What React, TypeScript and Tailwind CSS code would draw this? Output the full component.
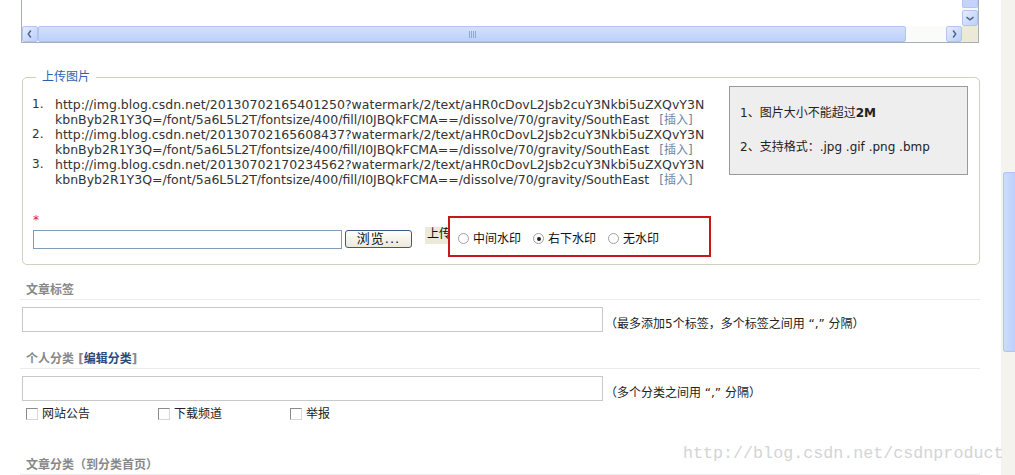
import React from "react";

const urls = [
  ["20130702165401250"],
  ["20130702165608437"],
  ["20130702170234562"],
];

function ArrowBtn({ dir }: { dir: "left" | "right" | "down" }) {
  const paths: Record<string, string> = {
    left: "M9 4 L6 8 L9 12",
    right: "M7 4 L10 8 L7 12",
    down: "M4 7 L8 10 L12 7",
  };
  return (
    <div className="w-[16px] h-[16px] shrink-0 rounded-[2px] border border-[#b3c4ee] bg-[linear-gradient(135deg,#e4ecff,#bccffa)] flex items-center justify-center">
      <svg width="16" height="16" viewBox="0 0 16 16">
        <path d={paths[dir]} fill="none" stroke="#4d6185" strokeWidth="1.6" />
      </svg>
    </div>
  );
}

function Radio({ checked }: { checked?: boolean }) {
  return (
    <span className="w-[11px] h-[11px] rounded-full border border-[#a0a0a0] bg-white flex items-center justify-center shrink-0">
      {checked && <span className="w-[4px] h-[4px] rounded-full bg-[#222]" />}
    </span>
  );
}

function Check() {
  return <span className="w-[12px] h-[12px] border border-[#8a8a8a] bg-white shrink-0 border-r-[#d8d8d8] border-b-[#d8d8d8]" />;
}

export default function App() {
  return (
    <div className="flex w-[1015px] h-[475px] overflow-hidden bg-white font-['DejaVu_Sans','Noto_Sans_CJK_SC',sans-serif] text-[12px] text-[#333]">
      <div className="relative w-[1001px] shrink-0 flex flex-col">
        {/* textarea remnant with scrollbars */}
        <div className="ml-[21px] w-[958px] h-[43px] border-x border-b border-[#a8aeb8] flex flex-col">
          <div className="flex h-[26px]">
            <div className="flex-1" />
            <div className="w-[16px] flex flex-col bg-[#f8f8f6]">
              <div className="h-[8px] rounded-b-[2px] border border-t-0 border-[#b3c4ee] bg-[#c3d3fb]" />
              <div className="flex-1" />
              <ArrowBtn dir="down" />
            </div>
          </div>
          <div className="flex h-[16px]">
            <ArrowBtn dir="left" />
            <div className="w-[868px] h-[16px] rounded-[2px] border border-[#b3c4ee] bg-[linear-gradient(180deg,#d3e0fd,#bcd0fb)] flex items-center justify-center">
              <div className="flex gap-[1px]">
                <span className="w-[1px] h-[7px] bg-[#8fa6d8]" />
                <span className="w-[1px] h-[7px] bg-[#8fa6d8]" />
                <span className="w-[1px] h-[7px] bg-[#8fa6d8]" />
                <span className="w-[1px] h-[7px] bg-[#8fa6d8]" />
              </div>
            </div>
            <div className="flex-1 bg-[#fbfbf9]" />
            <ArrowBtn dir="right" />
            <div className="w-[16px] bg-[#ece9d8]" />
          </div>
        </div>

        {/* upload fieldset */}
        <fieldset className="ml-[22px] mt-[27px] w-[958px] border border-[#d0d0bf] rounded-[5px] px-[9px] pb-[15px]">
          <legend className="ml-[4px] px-[6px] leading-[15px] text-[#2f5fb0]">上传图片</legend>
          <div className="flex items-start pt-[1px]">
            <div className="flex-1 flex flex-col mt-[11px]">
              {urls.map((u, i) => (
                <div key={i} className="flex h-[30px] text-[12.5px] leading-[15px] whitespace-nowrap">
                  <span className="w-[23px] shrink-0 text-[12px]">{i + 1}.</span>
                  <div className="flex flex-col">
                    <div className="h-[15px]">http://img.blog.csdn.net/{u[0]}?watermark/2/text/aHR0cDovL2Jsb2cuY3Nkbi5uZXQvY3N</div>
                    <div className="h-[15px] flex items-baseline">
                      <span>kbnByb2R1Y3Q=/font/5a6L5L2T/fontsize/400/fill/I0JBQkFCMA==/dissolve/70/gravity/SouthEast</span>
                      <span className="ml-[10px] text-[12px] text-[#6f86a6]">[插入]</span>
                    </div>
                  </div>
                </div>
              ))}
            </div>
            <div className="w-[239px] h-[89px] mr-[2px] bg-[#eeeeee] border border-[#9a9a9a] pl-[10px] pt-[19px] leading-[15px] text-[#222]">
              <div>
                1、图片大小不能超过<span className="font-bold">2M</span>
              </div>
              <div className="mt-[19px]">2、支持格式：.jpg .gif .png .bmp</div>
            </div>
          </div>
          <div className="mt-[27px] text-[#d22] leading-[12px] pl-[1px]">*</div>
          <div className="relative mt-[4px] flex items-start h-[19px]">
            <div className="ml-[1px] w-[309px] h-[19px] border border-[#7f9db9] bg-white" />
            <button className="ml-[3px] w-[67px] h-[18px] rounded-[3px] border border-[#3a5a85] bg-[linear-gradient(180deg,#ffffff,#ece9d8)] text-[13px] leading-[16px] text-[#111] tracking-[1px]">
              浏览...
            </button>
            <div className="ml-[13px] -mt-[3px] h-[17px] w-[30px] bg-[#ece9d8] leading-[15px] pl-[2px] text-[#111]">上传</div>
            <div className="absolute left-[416px] top-[-14px] w-[263px] h-[41px] border-2 border-[#c8161d] bg-white flex items-center pl-[8px] pt-[4px] text-[#111]">
              <div className="flex items-center">
                <Radio />
                <span className="ml-[4px]">中间水印</span>
              </div>
              <div className="flex items-center ml-[12px]">
                <Radio checked />
                <span className="ml-[4px]">右下水印</span>
              </div>
              <div className="flex items-center ml-[12px]">
                <Radio />
                <span className="ml-[4px]">无水印</span>
              </div>
            </div>
          </div>
        </fieldset>

        {/* tags */}
        <div className="ml-[20px] w-[960px] mt-[16px]">
          <div className="pl-[6px] pt-[2px] pb-[1px] leading-[15px] font-bold text-[#888] border-b border-[#ececec]">文章标签</div>
          <div className="mt-[7px] flex items-end">
            <div className="ml-[2px] w-[581px] h-[25px] border border-[#c8c8c8]" />
            <span className="ml-[2px] leading-[15px] text-[#222]">（最多添加5个标签，多个标签之间用 “,” 分隔）</span>
          </div>
        </div>

        {/* personal category */}
        <div className="ml-[20px] w-[960px] mt-[17px]">
          <div className="pl-[6px] pt-[3px] pb-[1px] leading-[15px] font-bold text-[#888] border-b border-[#ececec]">
            个人分类 [<span className="text-[#2c4a7a]">编辑分类</span>]
          </div>
          <div className="mt-[7px] flex items-end">
            <div className="ml-[2px] w-[581px] h-[25px] border border-[#c8c8c8]" />
            <span className="ml-[2px] leading-[15px] text-[#222]">（多个分类之间用 “,” 分隔）</span>
          </div>
          <div className="mt-[6px] flex items-center h-[14px] pl-[6px] text-[#222]">
            <div className="w-[132px] flex items-center gap-[4px]">
              <Check />
              <span>网站公告</span>
            </div>
            <div className="w-[132px] flex items-center gap-[4px]">
              <Check />
              <span>下载频道</span>
            </div>
            <div className="flex items-center gap-[4px]">
              <Check />
              <span>举报</span>
            </div>
          </div>
        </div>

        {/* article category */}
        <div className="ml-[20px] w-[960px] mt-[35px]">
          <div className="pl-[6px] pt-[2px] pb-[1px] leading-[15px] font-bold text-[#888] border-b border-[#ececec]">文章分类（到分类首页）</div>
        </div>

        <div className="absolute left-[683px] top-[444px] font-['Liberation_Mono',monospace] text-[16.7px] leading-[20px] text-[#d4d4d4] whitespace-nowrap">
          http://blog.csdn.net/csdnproduct
        </div>
      </div>

      {/* page scrollbar */}
      <div className="flex-1 bg-[#f4f3ee] flex flex-col pt-[172px] pl-[2px]">
        <div className="h-[180px] rounded-l-[3px] border border-r-0 border-[#b1c4f3] bg-[linear-gradient(90deg,#cddcfd,#bcd0fb)]" />
      </div>
    </div>
  );
}
